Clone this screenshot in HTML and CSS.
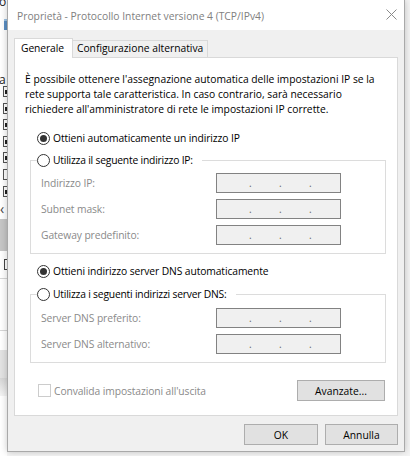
FILE: index.html
```html
<!DOCTYPE html>
<html lang="it">
<head>
<meta charset="utf-8">
<title>Proprietà - Protocollo Internet versione 4 (TCP/IPv4)</title>
<link rel="stylesheet" href="styles.css">
</head>
<body>
<div class="screen">
  <div class="bgwin">
    <span class="bg-text bg-top">o</span>
    <span class="bg-icon"></span>
    <span class="bg-text bg-a">a</span>
    <div class="bg-list">
      <span class="bg-check on"></span>
      <span class="bg-check on"></span>
      <span class="bg-check on"></span>
      <span class="bg-check on"></span>
      <span class="bg-check on"></span>
      <span class="bg-check"></span>
      <span class="bg-check on"></span>
    </div>
    <span class="bg-arrow">&lsaquo;</span>
    <span class="bg-bar"></span>
    <span class="bg-check bg-lone"></span>
    <span class="bg-line"></span>
    <span class="bg-line bg-line2"></span>
    <span class="bg-block"></span>
    <span class="bg-shadow"></span>
  </div>

  <div class="dialog">
    <div class="titlebar">
      <span class="title">Proprietà - Protocollo Internet versione 4 (TCP/IPv4)</span>
      <svg class="close" width="11" height="11" viewBox="0 0 11 11" aria-hidden="true">
        <path d="M0.5 0.5 L10.5 10.5 M10.5 0.5 L0.5 10.5" stroke="#8a8a8a" stroke-width="1" fill="none"/>
      </svg>
    </div>

    <div class="body">
      <div class="tabs">
        <div class="tab active">Generale</div>
        <div class="tab tab-alt">Configurazione alternativa</div>
      </div>

      <div class="panel">
        <p class="desc">È possibile ottenere l'assegnazione automatica delle impostazioni IP se la<br>rete supporta tale caratteristica. In caso contrario, sarà necessario<br>richiedere all'amministratore di rete le impostazioni IP corrette.</p>

        <div class="radio-row"><span class="radio on"></span><span>Ottieni automaticamente un indirizzo IP</span></div>

        <fieldset class="group">
          <legend class="legend"><span class="radio"></span><span>Utilizza il seguente indirizzo IP:</span></legend>
          <div class="rows">
            <div class="field-row"><span class="label">Indirizzo IP:</span><span class="ipbox"><i>.</i><i>.</i><i>.</i></span></div>
            <div class="field-row"><span class="label">Subnet mask:</span><span class="ipbox"><i>.</i><i>.</i><i>.</i></span></div>
            <div class="field-row"><span class="label">Gateway predefinito:</span><span class="ipbox"><i>.</i><i>.</i><i>.</i></span></div>
          </div>
        </fieldset>

        <div class="radio-row dns"><span class="radio on"></span><span>Ottieni indirizzo server DNS automaticamente</span></div>

        <fieldset class="group group-dns">
          <legend class="legend"><span class="radio"></span><span>Utilizza i seguenti indirizzi server DNS:</span></legend>
          <div class="rows">
            <div class="field-row"><span class="label">Server DNS preferito:</span><span class="ipbox"><i>.</i><i>.</i><i>.</i></span></div>
            <div class="field-row"><span class="label">Server DNS alternativo:</span><span class="ipbox"><i>.</i><i>.</i><i>.</i></span></div>
          </div>
        </fieldset>

        <div class="bottom-row">
          <span class="check-label"><span class="checkbox"></span><span>Convalida impostazioni all'uscita</span></span>
          <span class="btn btn-adv">Avanzate...</span>
        </div>
      </div>

      <div class="buttons">
        <span class="btn btn-ok">OK</span>
        <span class="btn btn-cancel">Annulla</span>
      </div>
    </div>
  </div>

  <div class="rightstrip"></div>
</div>
</body>
</html>
```

FILE: styles.css
```css
* { box-sizing: border-box; }

html, body {
  margin: 0;
  padding: 0;
}

body {
  width: 410px;
  height: 456px;
  overflow: hidden;
  background: #f6f6f6;
  font-family: "Open Sans", "Noto Sans", sans-serif;
  font-size: 10.3px;
  letter-spacing: -0.1px;
  color: #000;
}

.screen {
  display: flex;
  height: 456px;
}

/* background window strip on the left */
.bgwin {
  width: 7px;
  flex: none;
  height: 456px;
  background: #fff;
  display: flex;
  flex-direction: column;
  overflow: hidden;
}

.bg-text {
  display: block;
  font-size: 12px;
  color: #222;
  overflow: hidden;
}

.bg-top {
  height: 19px;
  line-height: 4px;
  margin-left: -1px;
}

.bg-icon {
  display: block;
  width: 3px;
  height: 11px;
  margin-left: 4px;
  background: #5b8fc4;
  border-top: 2px solid #9cc3e6;
}

.bg-a {
  height: 12px;
  margin-top: 43px;
  line-height: 14px;
  margin-left: -1px;
}

.bg-list {
  display: flex;
  flex-direction: column;
  gap: 5.6px;
  margin-top: 1px;
}

.bg-check {
  display: block;
  width: 5px;
  height: 11px;
  margin-left: 3px;
  border: 1px solid #555;
  border-right: none;
  background: #fff;
  position: relative;
}

.bg-check.on::after {
  content: "";
  position: absolute;
  left: 1px;
  top: 3px;
  width: 2px;
  height: 4px;
  background: #222;
}

.bg-arrow {
  display: block;
  height: 14px;
  margin-top: 6px;
  font-size: 14px;
  line-height: 12px;
  color: #444;
}

.bg-bar {
  display: block;
  height: 32px;
  margin-top: 2px;
  background: #c6c6c6;
}

.bg-lone {
  margin-top: 8px;
  margin-left: 4px;
  border-color: #444;
}

.bg-line {
  display: block;
  height: 1px;
  margin-top: 8px;
  background: #d6d6d6;
}

.bg-line2 {
  margin-top: 51px;
}

.bg-block {
  display: block;
  height: 28px;
  margin-top: 19px;
  background: #e2e2e2;
}

.bg-shadow {
  display: block;
  height: 18px;
  background: linear-gradient(#d6d6d6, #f4f4f4);
}

/* dialog */
.dialog {
  width: 398px;
  height: 452px;
  flex: none;
  display: flex;
  flex-direction: column;
  background: #f0f0f0;
  border: 1px solid #a9a9a9;
  border-top: none;
  box-shadow: 0 0 7px rgba(0, 0, 0, 0.22);
  z-index: 1;
}

.titlebar {
  height: 30px;
  flex: none;
  background: #fff;
  display: flex;
  align-items: center;
  justify-content: space-between;
  padding: 0 7px 0 9px;
}

.title {
  color: #808080;
  font-size: 10.3px;
  letter-spacing: 0;
  line-height: 16px;
  padding-top: 1px;
}

.close {
  display: block;
  margin-top: -2px;
}

.body {
  flex: 1;
  display: flex;
  flex-direction: column;
  padding: 8px 6px 0 6px;
}

.tabs {
  display: flex;
  align-items: flex-start;
  height: 19px;
  flex: none;
}

.tab {
  height: 17px;
  margin-top: 2px;
  padding: 0 4px 0 4px;
  line-height: 15px;
  background: #f0f0f0;
  border: 1px solid #d9d9d9;
  border-bottom: none;
  border-left: none;
  white-space: nowrap;
}

.tab-alt {
  letter-spacing: 0;
}

.tab.active {
  height: 20px;
  margin-top: 0;
  padding: 0 8px 0 6px;
  line-height: 19px;
  background: #fff;
  border-left: 1px solid #d9d9d9;
  position: relative;
  z-index: 2;
}

.panel {
  height: 359px;
  flex: none;
  background: #fff;
  border: 1px solid #d9d9d9;
  display: flex;
  flex-direction: column;
}

.desc {
  margin: 14px 0 0 10px;
  line-height: 15px;
  letter-spacing: 0;
  white-space: nowrap;
}

.radio-row {
  display: flex;
  align-items: center;
  gap: 3px;
  height: 16px;
  margin: 13px 0 0 22px;
}

.radio-row.dns {
  margin-top: 9px;
}

.radio {
  width: 13px;
  height: 13px;
  flex: none;
  border: 1px solid #333;
  border-radius: 50%;
  background: #fff;
  display: flex;
  align-items: center;
  justify-content: center;
}

.radio.on::after {
  content: "";
  width: 7px;
  height: 7px;
  border-radius: 50%;
  background: #333;
}

.group {
  margin: 6px 11px 0 15px;
  padding: 0;
  border: 1px solid #dcdcdc;
  min-width: 0;
}

.group-dns {
  margin-top: 7px;
}

.legend {
  display: flex;
  align-items: center;
  gap: 3px;
  height: 16px;
  margin-left: 6px;
  padding: 0 9px 0 0;
  letter-spacing: -0.2px;
  white-space: nowrap;
}

.rows {
  display: flex;
  flex-direction: column;
  gap: 6px;
  padding: 5px 10px 8px 10px;
}

.group-dns .rows {
  padding-top: 6px;
}

.field-row {
  display: grid;
  grid-template-columns: 175px 125px;
  align-items: center;
  height: 20px;
}

.label {
  color: #8a8a8a;
}

.ipbox {
  height: 20px;
  border: 1px solid #828282;
  background: #f0f0f0;
  display: flex;
  gap: 27px;
  padding-left: 32px;
  color: #6a6a6a;
  line-height: 19px;
}

.ipbox i {
  font-style: normal;
  width: 3px;
}

.bottom-row {
  display: flex;
  justify-content: space-between;
  align-items: center;
  height: 21px;
  margin: 17px 12px 0 23px;
}

.check-label {
  display: flex;
  align-items: center;
  gap: 3px;
  color: #8a8a8a;
}

.checkbox {
  width: 13px;
  height: 13px;
  border: 1px solid #cccccc;
  background: #fff;
}

.btn {
  display: flex;
  align-items: center;
  justify-content: center;
  height: 21px;
  background: #e1e1e1;
  border: 1px solid #adadad;
  color: #000;
  letter-spacing: 0;
}

.btn-adv {
  width: 88px;
}

.buttons {
  display: flex;
  justify-content: flex-end;
  gap: 7px;
  margin-top: 8px;
}

.btn-ok {
  width: 74px;
}

.btn-cancel {
  width: 73px;
}

.rightstrip {
  flex: 1;
  background: #f4f4f4;
}
```
